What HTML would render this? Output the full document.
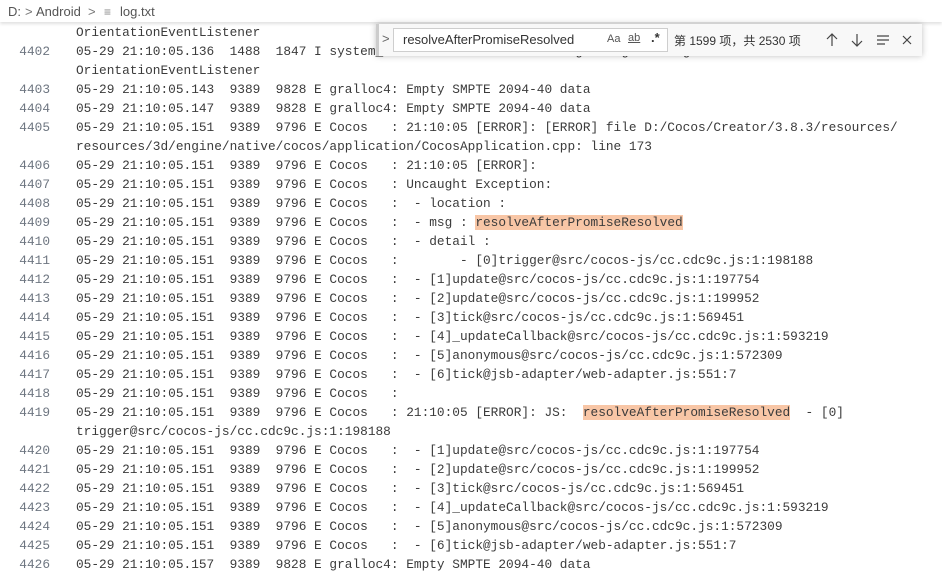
<!DOCTYPE html>
<html><head><meta charset="utf-8"><style>
body{margin:0;width:942px;height:576px;overflow:hidden;background:#fff;position:relative;font-family:"Liberation Mono",monospace;}
.bc{position:absolute;left:0;top:0;width:942px;height:22px;background:#fff;box-shadow:0 2px 3px rgba(0,0,0,0.12);font-family:"Liberation Sans",sans-serif;font-size:13px;color:#555;line-height:24px;z-index:2}
.bc span{position:absolute;top:0}
.ed{position:absolute;left:0;top:23px;width:942px}
.r{height:19px;line-height:19px;font-size:12.8px;white-space:pre;color:#3b3b3b;position:relative}
.n{position:absolute;left:0;width:50px;text-align:right;color:#6e7681}
.t{position:absolute;left:76px}
.h{background:#f8c6a6}
.fw{position:absolute;left:376px;top:24px;width:546px;height:32px;background:#f8f8f8;box-shadow:0 0 6px rgba(0,0,0,0.25);z-index:3;font-family:"Liberation Sans","Noto Sans CJK SC",sans-serif;font-size:13px;color:#444}
.fw .in{position:absolute;left:17px;top:4px;width:273px;height:22px;border:1px solid #cecece;background:#fff}
</style></head><body>
<div class="bc"><span style="left:8px">D:</span><span style="left:25px;color:#777">&gt;</span><span style="left:36px">Android</span><span style="left:88px;color:#777">&gt;</span><span style="left:104px;color:#888;font-size:12px">≡</span><span style="left:120px">log.txt</span></div>
<div class="ed">
<div class="r"><span class="t">OrientationEventListener</span></div>
<div class="r"><span class="n">4402</span><span class="t">05-29 21:10:05.136  1488  1847 I system_server: onOrientationChanged registering</span></div>
<div class="r"><span class="t">OrientationEventListener</span></div>
<div class="r"><span class="n">4403</span><span class="t">05-29 21:10:05.143  9389  9828 E gralloc4: Empty SMPTE 2094-40 data</span></div>
<div class="r"><span class="n">4404</span><span class="t">05-29 21:10:05.147  9389  9828 E gralloc4: Empty SMPTE 2094-40 data</span></div>
<div class="r"><span class="n">4405</span><span class="t">05-29 21:10:05.151  9389  9796 E Cocos   : 21:10:05 [ERROR]: [ERROR] file D:/Cocos/Creator/3.8.3/resources/</span></div>
<div class="r"><span class="t">resources/3d/engine/native/cocos/application/CocosApplication.cpp: line 173</span></div>
<div class="r"><span class="n">4406</span><span class="t">05-29 21:10:05.151  9389  9796 E Cocos   : 21:10:05 [ERROR]:</span></div>
<div class="r"><span class="n">4407</span><span class="t">05-29 21:10:05.151  9389  9796 E Cocos   : Uncaught Exception:</span></div>
<div class="r"><span class="n">4408</span><span class="t">05-29 21:10:05.151  9389  9796 E Cocos   :  - location :</span></div>
<div class="r"><span class="n">4409</span><span class="t">05-29 21:10:05.151  9389  9796 E Cocos   :  - msg : <span class="h">resolveAfterPromiseResolved</span></span></div>
<div class="r"><span class="n">4410</span><span class="t">05-29 21:10:05.151  9389  9796 E Cocos   :  - detail :</span></div>
<div class="r"><span class="n">4411</span><span class="t">05-29 21:10:05.151  9389  9796 E Cocos   :        - [0]trigger@src/cocos-js/cc.cdc9c.js:1:198188</span></div>
<div class="r"><span class="n">4412</span><span class="t">05-29 21:10:05.151  9389  9796 E Cocos   :  - [1]update@src/cocos-js/cc.cdc9c.js:1:197754</span></div>
<div class="r"><span class="n">4413</span><span class="t">05-29 21:10:05.151  9389  9796 E Cocos   :  - [2]update@src/cocos-js/cc.cdc9c.js:1:199952</span></div>
<div class="r"><span class="n">4414</span><span class="t">05-29 21:10:05.151  9389  9796 E Cocos   :  - [3]tick@src/cocos-js/cc.cdc9c.js:1:569451</span></div>
<div class="r"><span class="n">4415</span><span class="t">05-29 21:10:05.151  9389  9796 E Cocos   :  - [4]_updateCallback@src/cocos-js/cc.cdc9c.js:1:593219</span></div>
<div class="r"><span class="n">4416</span><span class="t">05-29 21:10:05.151  9389  9796 E Cocos   :  - [5]anonymous@src/cocos-js/cc.cdc9c.js:1:572309</span></div>
<div class="r"><span class="n">4417</span><span class="t">05-29 21:10:05.151  9389  9796 E Cocos   :  - [6]tick@jsb-adapter/web-adapter.js:551:7</span></div>
<div class="r"><span class="n">4418</span><span class="t">05-29 21:10:05.151  9389  9796 E Cocos   :</span></div>
<div class="r"><span class="n">4419</span><span class="t">05-29 21:10:05.151  9389  9796 E Cocos   : 21:10:05 [ERROR]: JS:  <span class="h">resolveAfterPromiseResolved</span>  - [0]</span></div>
<div class="r"><span class="t">trigger@src/cocos-js/cc.cdc9c.js:1:198188</span></div>
<div class="r"><span class="n">4420</span><span class="t">05-29 21:10:05.151  9389  9796 E Cocos   :  - [1]update@src/cocos-js/cc.cdc9c.js:1:197754</span></div>
<div class="r"><span class="n">4421</span><span class="t">05-29 21:10:05.151  9389  9796 E Cocos   :  - [2]update@src/cocos-js/cc.cdc9c.js:1:199952</span></div>
<div class="r"><span class="n">4422</span><span class="t">05-29 21:10:05.151  9389  9796 E Cocos   :  - [3]tick@src/cocos-js/cc.cdc9c.js:1:569451</span></div>
<div class="r"><span class="n">4423</span><span class="t">05-29 21:10:05.151  9389  9796 E Cocos   :  - [4]_updateCallback@src/cocos-js/cc.cdc9c.js:1:593219</span></div>
<div class="r"><span class="n">4424</span><span class="t">05-29 21:10:05.151  9389  9796 E Cocos   :  - [5]anonymous@src/cocos-js/cc.cdc9c.js:1:572309</span></div>
<div class="r"><span class="n">4425</span><span class="t">05-29 21:10:05.151  9389  9796 E Cocos   :  - [6]tick@jsb-adapter/web-adapter.js:551:7</span></div>
<div class="r"><span class="n">4426</span><span class="t">05-29 21:10:05.157  9389  9828 E gralloc4: Empty SMPTE 2094-40 data</span></div>
</div>
<div class="fw">
<div style="position:absolute;left:0;top:0;width:3px;height:32px;background:#ccc"></div>
<span style="position:absolute;left:6px;top:7px;color:#666">&gt;</span>
<div class="in"><span style="position:absolute;left:9px;top:3px;color:#333">resolveAfterPromiseResolved</span>
<span style="position:absolute;left:213px;top:4px;font-size:11px;color:#555">Aa</span>
<span style="position:absolute;left:234px;top:3px;font-size:11px;color:#555;text-decoration:underline">ab</span>
<span style="position:absolute;left:257px;top:1px;font-size:13px;color:#333;font-weight:bold">.*</span></div>
<span style="position:absolute;left:298px;top:8px;font-size:12px;color:#333">第 1599 项，共 2530 项</span>
<svg style="position:absolute;left:448px;top:8px" width="90" height="16" viewBox="0 0 90 16" fill="none" stroke="#444" stroke-width="1.2">
<path d="M8 2v12M3 7l5-5 5 5"/><path d="M33 2v12M28 9l5 5 5-5"/><path d="M53 4h12M53 8h12M53 12h8"/><path d="M79 4l8 8M87 4l-8 8"/></svg>
</div>
</body></html>
